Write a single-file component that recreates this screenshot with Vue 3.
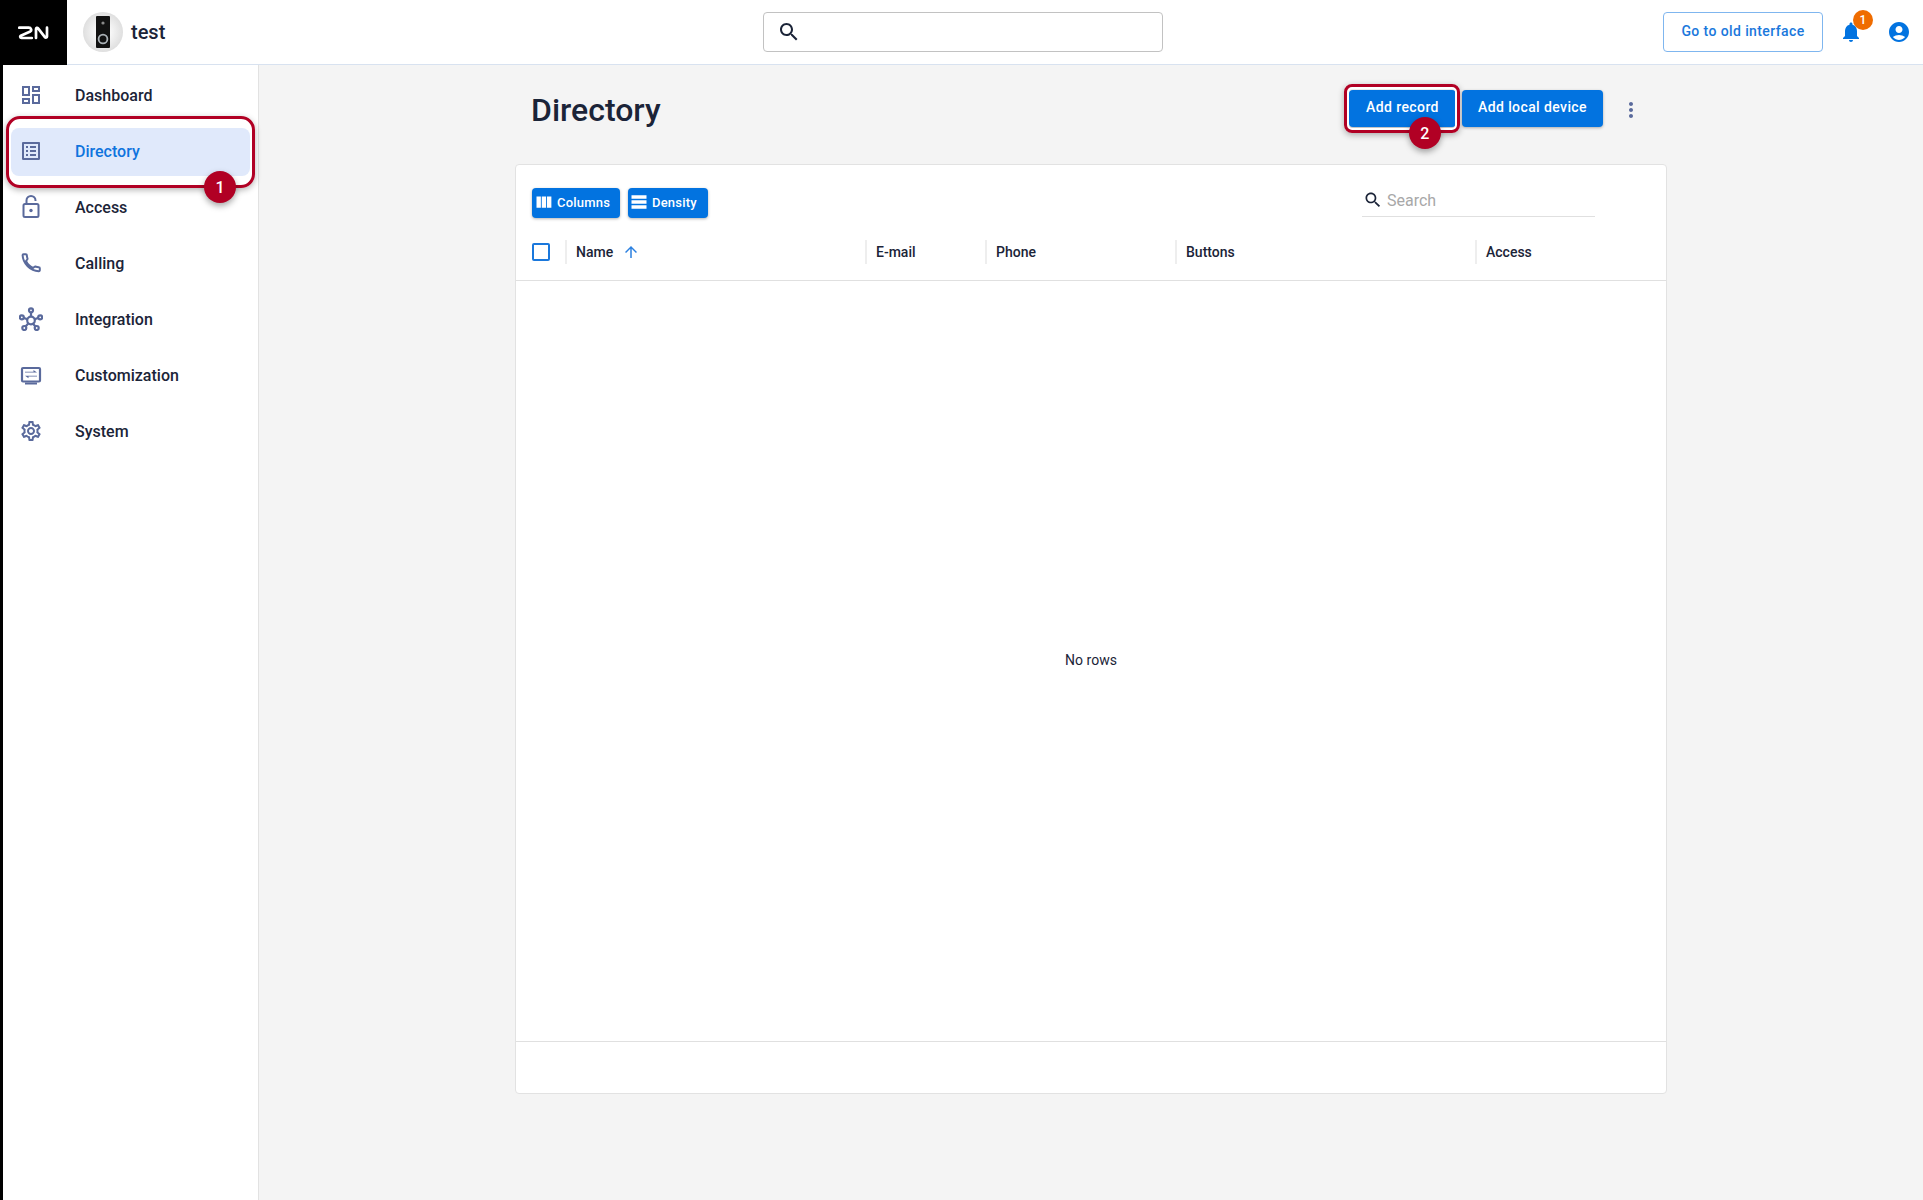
<script setup>
const navItems = [
  { label: 'Dashboard', icon: 'dashboard' },
  { label: 'Directory', icon: 'directory', active: true },
  { label: 'Access', icon: 'access' },
  { label: 'Calling', icon: 'calling' },
  { label: 'Integration', icon: 'integration' },
  { label: 'Customization', icon: 'customization' },
  { label: 'System', icon: 'system' }
]

const columns = [
  { label: 'Name', sorted: true },
  { label: 'E-mail' },
  { label: 'Phone' },
  { label: 'Buttons' },
  { label: 'Access' }
]

const searchPath = 'M15.5 14h-.79l-.28-.27C15.41 12.59 16 11.11 16 9.5 16 5.91 13.09 3 9.5 3S3 5.91 3 9.5 5.91 16 9.5 16c1.61 0 3.09-.59 4.23-1.57l.27.28v.79l5 4.99L20.49 19l-4.99-5zm-6 0C7.01 14 5 11.99 5 9.5S7.01 5 9.5 5 14 7.01 14 9.5 11.99 14 9.5 14z'
</script>

<template>
  <div class="page">
    <header class="topbar">
      <div class="logo">
        <svg width="31" height="14" viewBox="0 0 31 14" fill="none" stroke="#fff" stroke-width="2.7" stroke-linecap="round" stroke-linejoin="round">
          <path d="M1.3 1.7h9.5c2.3 0 3.2 2.6 1.5 3.800L2.800 9.700c-1 .6-.7 2.300.6 2.300h10.400" />
          <path d="M18 12V3c0-1.200 1.300-1.700 2.100-.7l6.800 8.800c.8 1 2.100.5 2.100-.7V1.700" />
        </svg>
      </div>
      <div class="device">
        <svg class="device-pic" width="40" height="40" viewBox="0 0 40 40">
          <defs>
            <radialGradient id="devbg" cx="0.5" cy="0.5" r="0.5">
              <stop offset="0.3" stop-color="#fafafa" />
              <stop offset="1" stop-color="#dfdfdf" />
            </radialGradient>
          </defs>
          <circle cx="20" cy="20" r="20" fill="url(#devbg)" />
          <rect x="13" y="4" width="14" height="32" rx="1" fill="#111" />
          <circle cx="20" cy="11" r="1.6" fill="#8a8a8a" />
          <circle cx="20" cy="27" r="4.4" fill="none" stroke="#a9b0b5" stroke-width="1.8" />
        </svg>
        <span class="device-name">test</span>
      </div>
      <div class="top-search">
        <div class="top-search-box">
          <svg width="24" height="24" viewBox="0 0 24 24" fill="#1b2438"><path :d="searchPath" /></svg>
        </div>
      </div>
      <div class="top-actions">
        <button class="old-btn">Go to old interface</button>
        <div class="bell">
          <svg width="24" height="24" viewBox="0 0 24 24" fill="#0273e0"><path d="M12 22c1.1 0 2-.9 2-2h-4c0 1.1.89 2 2 2zm6-6v-5c0-3.07-1.64-5.64-4.5-6.32V4c0-.83-.67-1.5-1.5-1.5s-1.5.67-1.5 1.5v.68C7.63 5.36 6 7.92 6 11v5l-2 2v1h16v-1l-2-2z" /></svg>
          <span class="bell-badge">1</span>
        </div>
        <svg width="24" height="24" viewBox="0 0 24 24" fill="#0273e0"><path d="M12 2C6.48 2 2 6.48 2 12s4.48 10 10 10 10-4.48 10-10S17.52 2 12 2zm0 4c1.93 0 3.5 1.57 3.5 3.5S13.93 13 12 13s-3.5-1.57-3.5-3.5S10.07 6 12 6zm0 14c-2.03 0-4.43-.82-6.14-2.88C7.55 15.8 9.68 15 12 15s4.45.8 6.14 2.12C16.43 19.18 14.03 20 12 20z" /></svg>
      </div>
    </header>

    <div class="body">
      <aside class="sidebar">
        <div v-for="item in navItems" :key="item.label" class="nav-item" :class="{ active: item.active }">
          <svg class="nav-icon" width="24" height="24" viewBox="0 0 24 24" fill="#5a6a9c">
            <path v-if="item.icon === 'dashboard'" d="M19 5v2h-4V5h4M9 5v6H5V5h4m10 8v6h-4v-6h4M9 17v2H5v-2h4M21 3h-8v6h8V3zM11 3H3v10h8V3zm10 8h-8v10h8V11zm-10 4H3v6h8v-6z" />
            <path v-else-if="item.icon === 'directory'" d="M19 5v14H5V5h14m1.1-2H3.9c-.5 0-.9.4-.9.9v16.2c0 .4.4.9.9.9h16.2c.4 0 .9-.5.9-.9V3.9c0-.5-.5-.9-.9-.9zM11 7h6v2h-6V7zm0 4h6v2h-6v-2zm0 4h6v2h-6zM7 7h2v2H7zm0 4h2v2H7zm0 4h2v2H7z" />
            <g v-else-if="item.icon === 'access'">
              <path fill="none" stroke="#5a6a9c" stroke-width="2" d="M6 9h12a1.500 1.500 0 0 1 1.500 1.500v10a1.500 1.500 0 0 1-1.500 1.500H6a1.500 1.500 0 0 1-1.500-1.500v-10A1.500 1.500 0 0 1 6 9zM7.500 9V5.500a4.500 4.500 0 0 1 9 0V6" />
              <circle cx="12" cy="15.500" r="1.700" />
            </g>
            <path v-else-if="item.icon === 'calling'" fill="none" stroke="#5a6a9c" stroke-width="2" stroke-linecap="round" stroke-linejoin="round" d="M4.500 3.200h2.300c.6 0 1 .4 1 .9.1 1.200.3 2.400.7 3.400.1.400 0 .7-.3 1L7 10c1.300 3 3.700 5.500 7 7l1.600-1.300c.3-.3.6-.4 1-.2 1 .4 2.200.6 3.300.7.500 0 .9.4.9 1v2.100c0 .6-.5 1-1.100.9C11.500 20 4 12.500 3.600 4.200c0-.6.3-1 .9-1z" />
            <g v-else-if="item.icon === 'integration'" fill="none" stroke="#5a6a9c" stroke-width="2.200">
              <circle cx="12" cy="13.500" r="3.800" />
              <circle cx="12" cy="3.300" r="2" />
              <circle cx="2.800" cy="10.300" r="2" />
              <circle cx="21.200" cy="10.300" r="2" />
              <circle cx="5.300" cy="21" r="2" />
              <circle cx="17.700" cy="21" r="2" />
              <path d="M12 5.100v4.800M4.600 10.900l3.900 1.300M19.400 10.900l-3.900 1.300M6.500 19.600l3.200-3.500M16.500 19.600l-3.200-3.500" />
            </g>
            <g v-else-if="item.icon === 'customization'">
              <rect x="3" y="5" width="18" height="13.500" rx="1" fill="none" stroke="#5a6a9c" stroke-width="2.200" />
              <path d="M6 19.500h12V21.500H6z" />
              <path d="M6 8.700h8.500V7l3.500 2.500H6zM18 13.500H9.500v1.700L6 12.700h12z" />
            </g>
            <path v-else d="M19.43 12.98c.04-.32.07-.64.07-.98 0-.34-.03-.66-.07-.98l2.11-1.65c.19-.15.24-.42.12-.64l-2-3.46c-.09-.16-.26-.25-.44-.25-.06 0-.12.01-.17.03l-2.49 1c-.52-.4-1.08-.73-1.69-.98l-.38-2.65C14.46 2.18 14.25 2 14 2h-4c-.25 0-.46.18-.49.42l-.38 2.65c-.61.25-1.17.59-1.69.98l-2.49-1c-.06-.02-.12-.03-.18-.03-.17 0-.34.09-.43.25l-2 3.46c-.13.22-.07.49.12.64l2.11 1.65c-.04.32-.07.65-.07.98 0 .33.03.66.07.98l-2.11 1.65c-.19.15-.24.42-.12.64l2 3.46c.09.16.26.25.44.25.06 0 .12-.01.17-.03l2.49-1c.52.4 1.08.73 1.69.98l.38 2.65c.03.24.24.42.49.42h4c.25 0 .46-.18.49-.42l.38-2.65c.61-.25 1.17-.59 1.69-.98l2.49 1c.06.02.12.03.18.03.17 0 .34-.09.43-.25l2-3.46c.12-.22.07-.49-.12-.64l-2.11-1.65zm-1.98-1.71c.04.31.05.52.05.73 0 .21-.02.43-.05.73l-.14 1.13.89.7 1.08.84-.7 1.21-1.27-.51-1.04-.42-.9.68c-.43.32-.84.56-1.25.73l-1.06.43-.16 1.13-.2 1.35h-1.4l-.19-1.35-.16-1.13-1.06-.43c-.43-.18-.83-.41-1.23-.71l-.91-.7-1.06.43-1.27.51-.7-1.21 1.08-.84.89-.7-.14-1.13c-.03-.31-.05-.54-.05-.74s.02-.43.05-.73l.14-1.13-.89-.7-1.08-.84.7-1.21 1.27.51 1.04.42.9-.68c.43-.32.84-.56 1.25-.73l1.06-.43.16-1.13.2-1.35h1.39l.19 1.35.16 1.13 1.06.43c.43.18.83.41 1.23.71l.91.7 1.06-.43 1.27-.51.7 1.21-1.07.85-.89.7.14 1.13zM12 8c-2.21 0-4 1.79-4 4s1.79 4 4 4 4-1.79 4-4-1.79-4-4-4zm0 6c-1.1 0-2-.9-2-2s.9-2 2-2 2 .9 2 2-.9 2-2 2z" />
          </svg>
          <span>{{ item.label }}</span>
          <template v-if="item.active">
            <div class="callout nav-callout"></div>
            <span class="step nav-step">1</span>
          </template>
        </div>
      </aside>

      <main class="main">
        <div class="content">
          <div class="page-head">
            <h1>Directory</h1>
            <div class="page-actions">
              <button class="primary add-record">
                Add record
                <div class="callout btn-callout"></div>
                <span class="step btn-step">2</span>
              </button>
              <button class="primary add-local">Add local device</button>
              <svg class="kebab" width="24" height="24" viewBox="0 0 24 24" fill="#5a6a9c"><path d="M12 8c1.1 0 2-.9 2-2s-.9-2-2-2-2 .9-2 2 .9 2 2 2zm0 2c-1.100 0-2 .9-2 2s.9 2 2 2 2-.9 2-2-.9-2-2-2zm0 6c-1.100 0-2 .9-2 2s.9 2 2 2 2-.9 2-2-.9-2-2-2z" /></svg>
            </div>
          </div>

          <section class="card">
            <div class="toolbar">
              <button class="tool-btn">
                <svg width="21" height="21" viewBox="0 0 24 24" fill="#fff"><path d="M10 18h5V5h-5v13zm-6 0h5V5H4v13zM16 5v13h5V5h-5z" /></svg>
                Columns
              </button>
              <button class="tool-btn">
                <svg width="20" height="20" viewBox="0 0 24 24" fill="#fff"><path d="M21 8H3V4h18v4zM21 10H3v4h18v-4zM21 16H3v4h18v-4z" /></svg>
                Density
              </button>
              <div class="table-search">
                <svg width="20" height="20" viewBox="0 0 24 24" fill="#1b2438"><path :d="searchPath" /></svg>
                <span>Search</span>
              </div>
            </div>

            <div class="table-head">
              <div class="check-cell"><span class="checkbox"></span></div>
              <div v-for="col in columns" :key="col.label" class="head-cell">
                <span>{{ col.label }}</span>
                <svg v-if="col.sorted" class="sort" width="18" height="18" viewBox="0 0 24 24" fill="#2b80e0"><path d="M4 12l1.410 1.410L11 7.830V20h2V7.830l5.580 5.590L20 12l-8-8-8 8z" /></svg>
              </div>
            </div>

            <div class="table-body">No rows</div>
            <div class="table-foot"></div>
          </section>
        </div>
      </main>
    </div>
  </div>
</template>

<style>
html, body {
  margin: 0;
  background: #f4f4f4;
}
</style>

<style scoped>
.page {
  height: 1200px;
  display: flex;
  flex-direction: column;
  font-family: Roboto, "Liberation Sans", sans-serif;
  color: #1b2438;
  background: #f4f4f4;
}

.topbar {
  height: 64px;
  flex: none;
  display: flex;
  align-items: center;
  background: #fff;
  border-bottom: 1px solid #d8e2f0;
}

.logo {
  width: 67px;
  height: 65px;
  flex: none;
  background: #000;
  display: flex;
  align-items: center;
  justify-content: center;
  margin-bottom: -1px;
}

.device {
  display: flex;
  align-items: center;
  gap: 8px;
  width: 696px;
  flex: none;
  padding-left: 16px;
  box-sizing: border-box;
}

.device-name {
  font-size: 20px;
  font-weight: 500;
}

.top-search {
  width: 400px;
  flex: none;
}

.top-search-box {
  height: 40px;
  box-sizing: border-box;
  border: 1px solid #c2c2c2;
  border-radius: 4px;
  display: flex;
  align-items: center;
  padding-left: 13px;
}

.top-actions {
  margin-left: auto;
  display: flex;
  align-items: center;
  padding-right: 12px;
}

.old-btn {
  width: 160px;
  height: 40px;
  padding: 0 0 2px;
  background: #fff;
  border: 1px solid #7fb6ef;
  border-radius: 4px;
  color: #1a78dc;
  font-family: inherit;
  font-size: 14px;
  font-weight: 500;
  letter-spacing: 0.4px;
}

.bell {
  position: relative;
  width: 24px;
  height: 24px;
  margin: 0 24px 0 16px;
}

.bell-badge {
  position: absolute;
  top: -10px;
  right: -10px;
  width: 20px;
  height: 20px;
  border-radius: 50%;
  background: #ef6c00;
  color: #fff;
  font-size: 12px;
  font-weight: 500;
  display: flex;
  align-items: center;
  justify-content: center;
}

.body {
  flex: 1;
  display: flex;
  min-height: 0;
}

.sidebar {
  width: 255px;
  flex: none;
  background: #fff;
  border-left: 3px solid #000;
  border-right: 1px solid #e2e2e2;
  padding-top: 7px;
}

.nav-item {
  position: relative;
  height: 48px;
  box-sizing: border-box;
  margin: 0 8px 8px;
  padding: 0 0 2px 8px;
  border-radius: 8px;
  display: flex;
  align-items: center;
  gap: 32px;
  font-size: 16px;
  font-weight: 500;
}

.nav-item.active {
  background: #e0e9fb;
  color: #0f74de;
}

.callout {
  position: absolute;
  border: 3px solid #b10024;
  background: transparent;
  box-shadow: 0 2px 6px rgba(0, 0, 0, 0.3), inset 0 0 0 2px #fff;
  pointer-events: none;
}

.nav-callout {
  top: -12px;
  bottom: -12px;
  left: -5px;
  right: -5px;
  border-radius: 14px;
}

.step {
  position: absolute;
  width: 32px;
  height: 32px;
  border-radius: 50%;
  background: #b10024;
  color: #fff;
  font-size: 16px;
  font-weight: 500;
  display: flex;
  align-items: center;
  justify-content: center;
  box-shadow: 0 3px 6px rgba(0, 0, 0, 0.35);
}

.nav-step {
  right: 14px;
  bottom: -27px;
}

.main {
  flex: 1;
  min-width: 0;
}

.content {
  width: 1152px;
  margin: 0 auto;
}

.page-head {
  display: flex;
  align-items: center;
  justify-content: space-between;
  height: 37px;
  padding: 25px 24px 37px 16px;
}

h1 {
  margin: 2px 0 0;
  font-size: 32px;
  font-weight: 500;
  color: #1b2438;
}

.page-actions {
  display: flex;
  align-items: center;
  gap: 6px;
}

.primary {
  position: relative;
  height: 37px;
  padding: 0 0 3px;
  border: none;
  border-radius: 4px;
  background: #0273e0;
  color: #fff;
  font-family: inherit;
  font-size: 14px;
  font-weight: 500;
  letter-spacing: 0.4px;
  box-shadow: 0 1px 3px rgba(0, 0, 0, 0.3);
}

.add-record {
  width: 107px;
}

.add-local {
  width: 141px;
}

.btn-callout {
  top: -6px;
  bottom: -6px;
  left: -5px;
  right: -4px;
  border-radius: 8px;
}

.btn-step {
  left: 60px;
  bottom: -22px;
}

.kebab {
  margin: 2px 0 0 10px;
}

.card {
  height: 930px;
  box-sizing: border-box;
  background: #fff;
  border: 1px solid #e2e2e2;
  border-radius: 4px;
  display: flex;
  flex-direction: column;
}

.toolbar {
  height: 63px;
  flex: none;
  box-sizing: border-box;
  padding: 23px 71px 0 16px;
  display: flex;
  align-items: flex-start;
  gap: 8px;
}

.tool-btn {
  height: 30px;
  width: 88px;
  padding: 0 0 2px 1px;
  border: none;
  border-radius: 4px;
  background: #0273e0;
  color: #fff;
  font-family: inherit;
  font-size: 13px;
  font-weight: 500;
  letter-spacing: 0.2px;
  display: flex;
  align-items: center;
  gap: 3px;
  box-shadow: 0 1px 3px rgba(0, 0, 0, 0.3);
}

.tool-btn + .tool-btn {
  width: 80px;
}

.table-search {
  margin-left: auto;
  width: 232px;
  height: 30px;
  box-sizing: content-box;
  border-bottom: 1px solid #e0e0e0;
  display: flex;
  align-items: center;
  gap: 4px;
  font-size: 16px;
  color: #a8a8a8;
  margin-top: -2px;
  padding: 0 0 0 1px;
}

.table-search svg,
.table-search span {
  position: relative;
  top: -1px;
}

.table-head {
  height: 53px;
  flex: none;
  box-sizing: border-box;
  padding-bottom: 4px;
  border-bottom: 1px solid #e0e0e0;
  display: grid;
  grid-template-columns: 49px 300px 120px 190px 300px 1fr;
  align-items: center;
  font-size: 14px;
  font-weight: 500;
}

.check-cell {
  padding-left: 16px;
}

.checkbox {
  display: block;
  width: 18px;
  height: 18px;
  box-sizing: border-box;
  border: 2px solid #1a78dc;
  border-radius: 2px;
}

.head-cell {
  height: 24px;
  box-sizing: border-box;
  border-left: 2px solid #eeeeee;
  padding-left: 9px;
  display: flex;
  align-items: center;
}

.sort {
  margin-left: 9px;
}

.table-body {
  flex: 1;
  display: flex;
  align-items: center;
  justify-content: center;
  padding-bottom: 2px;
  font-size: 14px;
}

.table-foot {
  height: 51px;
  flex: none;
  border-top: 1px solid #e0e0e0;
}
</style>
